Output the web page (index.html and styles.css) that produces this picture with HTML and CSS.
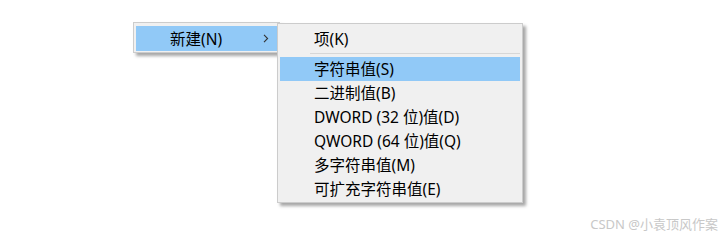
FILE: index.html
```html
<!DOCTYPE html>
<html lang="zh-CN">
<head>
    <meta charset="UTF-8">
    <meta name="viewport" content="width=device-width, initial-scale=1.0">
    <title>新建菜单</title>
    <link rel="stylesheet" href="styles.css">
</head>
<body>
    <div class="stage">
        <div class="menu menu-main">
            <div class="menu-item active">
                <span>新建(N)</span>
                <svg class="chevron" width="6" height="9" viewBox="0 0 6 9">
                    <path d="M1 0.8 L4.6 4.5 L1 8.2" fill="none" stroke="#333" stroke-width="1.1"/>
                </svg>
            </div>
        </div>
        <div class="menu menu-sub">
            <div class="menu-item">项(K)</div>
            <div class="separator"></div>
            <div class="menu-item active">字符串值(S)</div>
            <div class="menu-item">二进制值(B)</div>
            <div class="menu-item">DWORD (32 位)值(D)</div>
            <div class="menu-item">QWORD (64 位)值(Q)</div>
            <div class="menu-item">多字符串值(M)</div>
            <div class="menu-item">可扩充字符串值(E)</div>
        </div>
    </div>
    <div class="watermark">CSDN @小袁顶风作案</div>
</body>
</html>
```

FILE: styles.css
```css
body {
    margin: 0;
    background-color: #ffffff;
    font-family: "Noto Sans", "Noto Sans CJK SC", sans-serif;
    color: #000000;
}
.stage {
    display: flex;
    align-items: flex-start;
    padding: 22px 0 0 133px;
}
.menu {
    background-color: #f0f0f0;
    border: 1px solid #cccccc;
    box-shadow: 3px 3px 3px rgba(0,0,0,0.35);
}
.menu-main {
    width: 141px;
    padding: 3px 2px 1px 2px;
}
.menu-sub {
    position: relative;
    width: 240px;
    margin-top: 1px;
    margin-left: -3px;
    padding: 3px 2px 1px 2px;
}
.menu-item {
    display: flex;
    align-items: center;
    height: 24px;
    padding-left: 34px;
    font-size: 15.5px;
    line-height: 24px;
    white-space: nowrap;
}
.menu-main .menu-item {
    height: 25px;
}
.menu-item.active {
    background-color: #91c9f7;
}
.chevron {
    margin-left: auto;
    margin-right: 8px;
}
.separator {
    height: 0;
    margin: 2px 0 3px 30px;
    border-top: 1px solid #d7d7d7;
}
.watermark {
    margin-top: 13px;
    padding-right: 9px;
    text-align: right;
    font-size: 13px;
    line-height: 16px;
    color: #c8c8c8;
}
```
